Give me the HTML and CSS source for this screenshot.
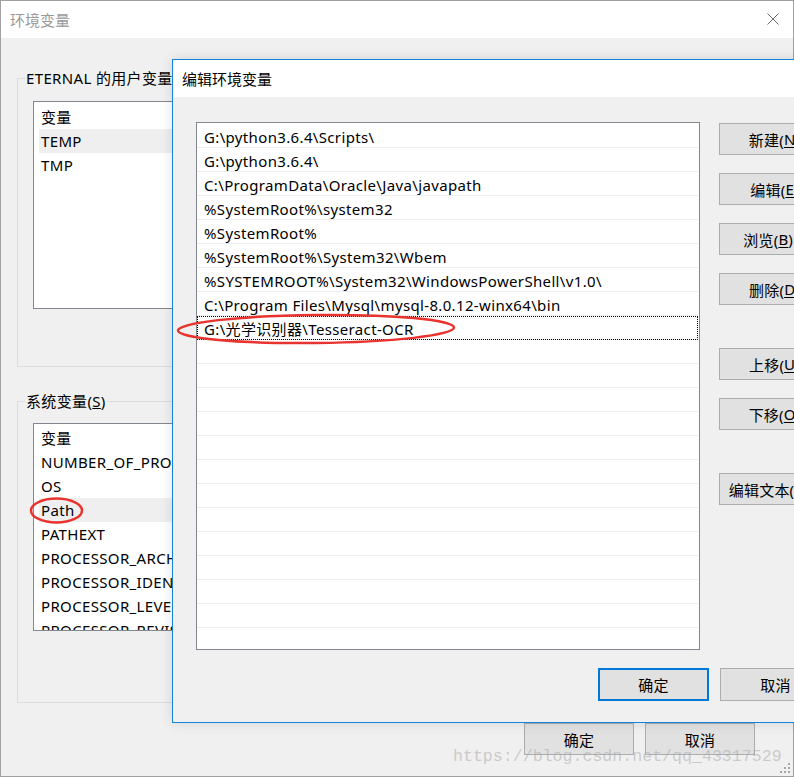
FILE: index.html
```html
<!DOCTYPE html>
<html lang="zh-CN">
<head>
<meta charset="utf-8">
<title>环境变量</title>
<link rel="stylesheet" href="styles.css">
</head>
<body>
<div class="screen">
  <div class="win main">
    <div class="titlebar">
      <span class="title inactive">环境变量</span>
      <svg class="close" width="12" height="12" viewBox="0 0 12 12"><path d="M0.5 0.5 L11.5 11.5 M11.5 0.5 L0.5 11.5" stroke="#6a6a6a" stroke-width="1" fill="none"/></svg>
    </div>
    <div class="content">
      <fieldset class="group user">
        <legend>ETERNAL 的用户变量</legend>
        <div class="list">
          <div class="item">变量</div>
          <div class="item sel">TEMP</div>
          <div class="item">TMP</div>
        </div>
      </fieldset>
      <fieldset class="group sys">
        <legend>系统变量(<u>S</u>)</legend>
        <div class="list">
          <div class="item">变量</div>
          <div class="item">NUMBER_OF_PROCESSORS</div>
          <div class="item">OS</div>
          <div class="item sel">Path</div>
          <div class="item">PATHEXT</div>
          <div class="item">PROCESSOR_ARCHITECTURE</div>
          <div class="item">PROCESSOR_IDENTIFIER</div>
          <div class="item">PROCESSOR_LEVEL</div>
          <div class="item">PROCESSOR_REVISION</div>
        </div>
      </fieldset>
      <div class="actions">
        <button class="btn wide">确定</button>
        <button class="btn wide">取消</button>
      </div>
    </div>
    <svg class="grip" width="12" height="12" viewBox="0 0 12 12">
      <rect x="9" y="1" width="2" height="2" fill="#a8a8a8"/>
      <rect x="5" y="5" width="2" height="2" fill="#a8a8a8"/>
      <rect x="9" y="5" width="2" height="2" fill="#a8a8a8"/>
      <rect x="1" y="9" width="2" height="2" fill="#a8a8a8"/>
      <rect x="5" y="9" width="2" height="2" fill="#a8a8a8"/>
      <rect x="9" y="9" width="2" height="2" fill="#a8a8a8"/>
    </svg>
  </div>

  <div class="win edit">
    <div class="titlebar">
      <span class="title">编辑环境变量</span>
    </div>
    <div class="edit-body">
      <div class="paths">
        <div class="row">G:\python3.6.4\Scripts\</div>
        <div class="row">G:\python3.6.4\</div>
        <div class="row">C:\ProgramData\Oracle\Java\javapath</div>
        <div class="row">%SystemRoot%\system32</div>
        <div class="row">%SystemRoot%</div>
        <div class="row">%SystemRoot%\System32\Wbem</div>
        <div class="row">%SYSTEMROOT%\System32\WindowsPowerShell\v1.0\</div>
        <div class="row">C:\Program Files\Mysql\mysql-8.0.12-winx64\bin</div>
        <div class="row focus">G:\光学识别器\Tesseract-OCR</div>
        <div class="row"></div><div class="row"></div><div class="row"></div>
        <div class="row"></div><div class="row"></div><div class="row"></div>
        <div class="row"></div><div class="row"></div><div class="row"></div>
        <div class="row"></div><div class="row"></div><div class="row"></div>
        <div class="row"></div>
      </div>
      <div class="side">
        <div class="side-group">
          <button class="btn side-btn">新建(<u>N</u>)</button>
          <button class="btn side-btn">编辑(<u>E</u>)</button>
          <button class="btn side-btn">浏览(<u>B</u>)...</button>
          <button class="btn side-btn">删除(<u>D</u>)</button>
        </div>
        <div class="side-group">
          <button class="btn side-btn">上移(<u>U</u>)</button>
          <button class="btn side-btn">下移(<u>O</u>)</button>
        </div>
        <div class="side-group">
          <button class="btn side-btn">编辑文本(<u>T</u>)...</button>
        </div>
      </div>
    </div>
    <div class="edit-actions">
      <button class="btn dlg default">确定</button>
      <button class="btn dlg">取消</button>
    </div>
  </div>

  <svg class="marks" width="794" height="777" viewBox="0 0 794 777">
    <ellipse cx="316" cy="329" rx="138" ry="14" fill="none" stroke="#e8332f" stroke-width="2.5" transform="rotate(-0.6 316 329)"/>
    <ellipse cx="56.5" cy="510.5" rx="25.5" ry="12" fill="none" stroke="#e8332f" stroke-width="2.5"/>
  </svg>
  <div class="watermark">https://blog.csdn.net/qq_43317529</div>
</div>
</body>
</html>
```

FILE: styles.css
```css
* { box-sizing: border-box; }

html, body {
  margin: 0;
  padding: 0;
  background: #f0f0f0;
}

body {
  font-family: "Noto Sans", "Noto Sans CJK SC", sans-serif;
  font-size: 15px;
  letter-spacing: 0.35px;
  color: #000;
}

.screen {
  position: relative;
  width: 794px;
  height: 777px;
  overflow: hidden;
}

.win {
  background: #f0f0f0;
}

.main {
  width: 794px;
  height: 777px;
  border: 1px solid #a0a0a0;
  position: relative;
  display: flex;
  flex-direction: column;
}

.titlebar {
  height: 37px;
  flex: none;
  background: #fff;
  display: flex;
  align-items: center;
  justify-content: space-between;
  padding: 0 14px 0 9px;
}

.title {
  font-size: 15px;
  line-height: 20px;
  letter-spacing: 0;
  font-family: "Noto Sans CJK SC", sans-serif;
}

.title.inactive {
  color: #9a9a9a;
}

.close {
  display: block;
  margin-top: -1px;
}

.content {
  padding: 0 38px 0 16px;
  display: flex;
  flex-direction: column;
}

.group {
  margin: 0;
  border: 1px solid #dcdcdc;
  padding: 0 0 0 7px;
  min-width: 0;
}

.group legend {
  padding: 0 1px;
  line-height: 20px;
  font-size: 15px;
}

.group.user {
  margin-top: 30px;
  padding-bottom: 57px;
  margin-right: -22px;
}

.group.sys {
  margin-top: 24px;
  padding-bottom: 71px;
  margin-right: -22px;
}

.list {
  margin-left: 8px;
  margin-right: 15px;
  height: 208px;
  border: 1px solid #828790;
  background: #fff;
  overflow: hidden;
  padding-top: 3px;
}

.user .list { margin-top: 13px; }
.sys .list { margin-top: 12px; padding-top: 2px; }

.item {
  height: 24px;
  line-height: 24px;
  margin-left: 5px;
  padding-left: 2px;
  white-space: nowrap;
}

.item.sel {
  background: #efefef;
}

.actions {
  margin-top: 20px;
  display: flex;
  justify-content: flex-end;
  gap: 11px;
}

.btn {
  font-family: "Noto Sans", "Noto Sans CJK SC", sans-serif;
  font-size: 15px;
  letter-spacing: 0.2px;
  color: #000;
  background: #e1e1e1;
  border: 1px solid #adadad;
  padding: 0;
  margin: 0;
  white-space: nowrap;
  display: flex;
  align-items: center;
  justify-content: center;
}

.btn u { text-underline-offset: 2px; }

.btn.wide {
  width: 110px;
  height: 32px;
}

.grip {
  position: absolute;
  right: 2px;
  bottom: 2px;
}

/* edit dialog */
.edit {
  position: absolute;
  left: 172px;
  top: 59px;
  width: 682px;
  height: 664px;
  border: 1px solid #1883d7;
  display: flex;
  flex-direction: column;
  box-shadow: 0 0 12px rgba(0, 0, 0, 0.12);
}

.edit-body {
  display: flex;
  padding: 25px 0 0 23px;
  gap: 19px;
}

.paths {
  width: 504px;
  height: 528px;
  border: 1px solid #828790;
  background: #fff;
  overflow: hidden;
  flex: none;
  padding-top: 1px;
}

.row {
  height: 24px;
  line-height: 24px;
  padding-top: 1px;
  border-bottom: 1px solid #ededed;
  padding-left: 7px;
  white-space: nowrap;
  margin-right: 1px;
}

.row.focus {
  outline: 1px dotted #000;
  outline-offset: -1px;
}

.side {
  display: flex;
  flex-direction: column;
  gap: 43px;
  padding-top: 1px;
}

.side-group {
  display: flex;
  flex-direction: column;
  gap: 18px;
}

.side-btn {
  width: 111px;
  height: 32px;
}

.edit-actions {
  display: flex;
  justify-content: flex-end;
  gap: 11px;
  padding-right: 22px;
  margin-top: 18px;
}

.btn.dlg {
  width: 111px;
  height: 33px;
}

.btn.default {
  border: 2px solid #0078d7;
}

.marks {
  position: absolute;
  left: 0;
  top: 0;
  pointer-events: none;
}

.watermark {
  position: absolute;
  left: 453px;
  top: 747px;
  font-family: "Liberation Mono", monospace;
  font-size: 16.6px;
  letter-spacing: 0;
  line-height: 20px;
  color: rgba(170, 170, 170, 0.55);
  white-space: nowrap;
  pointer-events: none;
}
```
